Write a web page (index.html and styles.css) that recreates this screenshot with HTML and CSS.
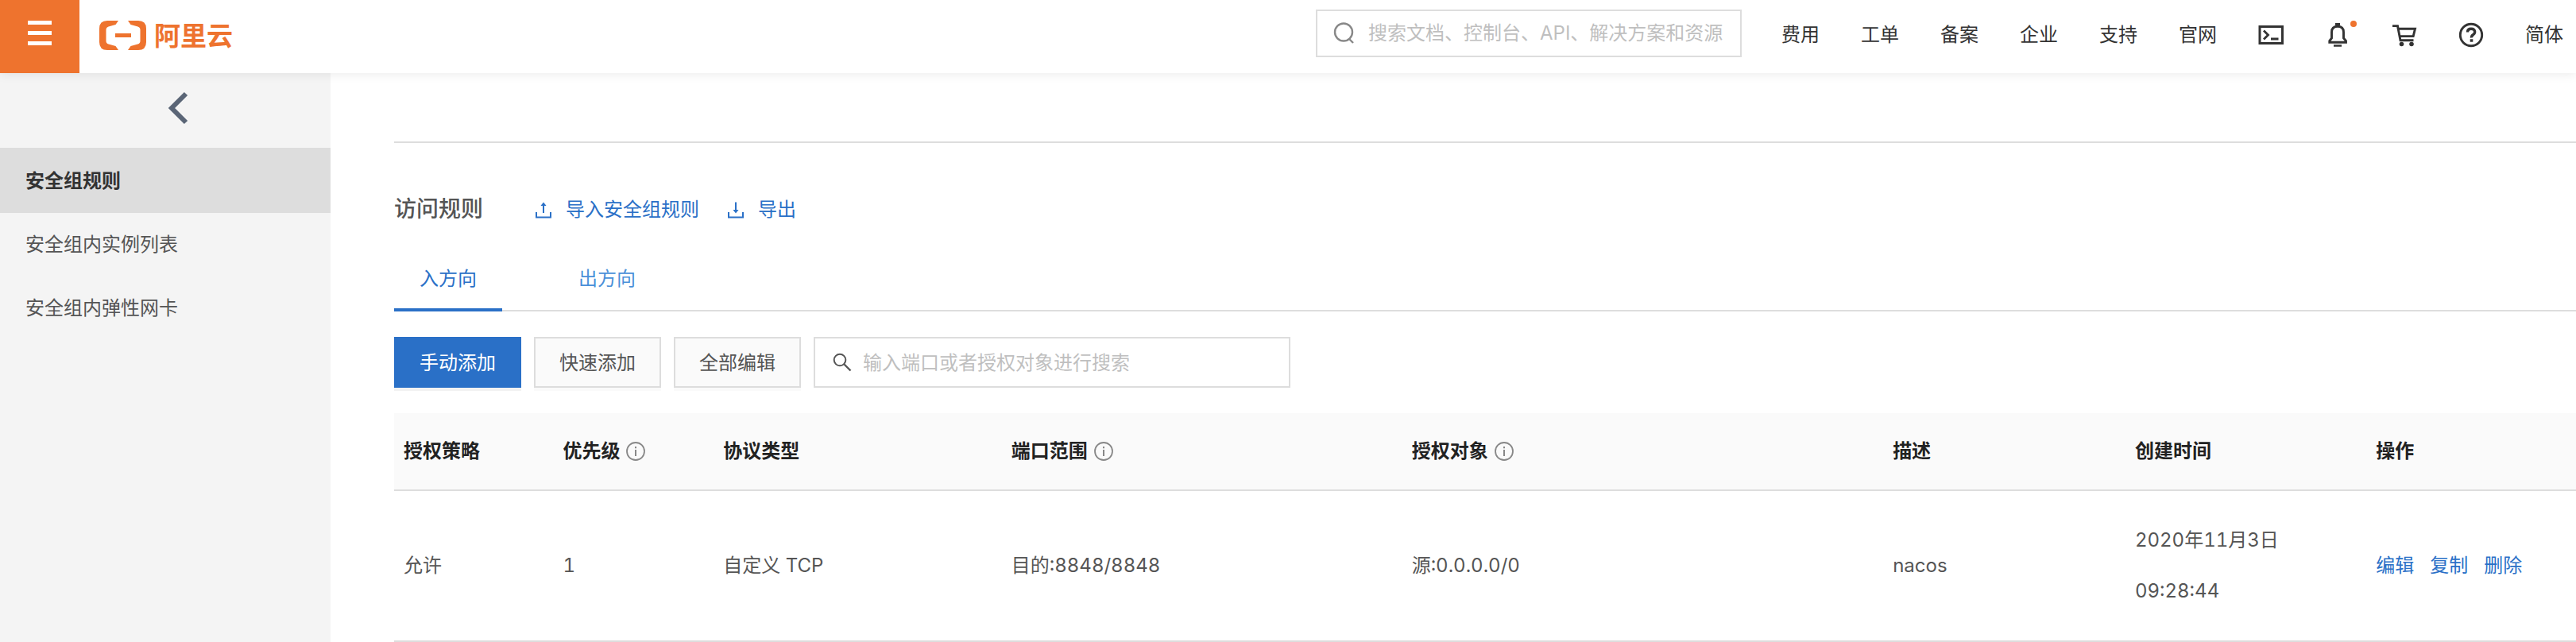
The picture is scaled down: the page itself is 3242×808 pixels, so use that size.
FILE: index.html
```html
<!DOCTYPE html>
<html lang="zh-CN">
<head>
<meta charset="utf-8">
<title>安全组规则</title>
<link rel="stylesheet" href="styles.css">
</head>
<body>
<header class="topbar">
  <button class="menu-button" type="button" aria-label="菜单">
    <svg width="30" height="32" viewBox="0 0 30 32"><path d="M0 0h30v5H0zM0 13h30v5H0zM0 26h30v5H0z" fill="#fff"/></svg>
  </button>
  <a class="logo" href="#">
    <svg width="60" height="38" viewBox="0 0 60 38" fill="currentColor">
      <path d="M24 0H10Q0 0 0 10V27Q0 37 10 37H24L20.500 32L11.500 29.500Q8.500 28.500 8.500 25.500V11.500Q8.500 8.500 11.500 7.500L20.500 5Z"/>
      <path d="M36 0H49Q59 0 59 10V27Q59 37 49 37H36L39.500 32L48.500 29.500Q51.500 28.500 51.500 25.500V11.500Q51.500 8.500 48.500 7.500L39.500 5Z"/>
      <path d="M20 16h20v5H20z"/>
    </svg>
    <span class="logo-text">阿里云</span>
  </a>
  <label class="search top-search">
    <svg width="26" height="28" viewBox="0 0 26 28" fill="none" stroke="#888" stroke-width="2.400"><circle cx="13" cy="12.500" r="11"/><path d="M19.500 20.500L25 26"/></svg>
    <input class="search-input" type="text" aria-label="搜索" placeholder="搜索文档、控制台、API、解决方案和资源">
  </label>
  <nav class="topnav">
    <a href="#">费用</a>
    <a href="#">工单</a>
    <a href="#">备案</a>
    <a href="#">企业</a>
    <a href="#">支持</a>
    <a href="#">官网</a>
    <a class="icon-link" href="#" aria-label="命令行"><svg width="32" height="32" viewBox="0 0 32 32" fill="none" stroke="currentColor"><path d="M2 5.500h28.500v21H2z" stroke-width="3"/><path d="M7 10.500l5.500 5.500L7 21.500M16 21h9.500" stroke-width="2.800"/></svg></a>
    <a class="icon-link" href="#" aria-label="消息"><svg width="32" height="32" viewBox="0 0 32 32" fill="none" stroke="currentColor"><path d="M13 1h6v3h-6zM11 28.200h10v2.600H11z" fill="currentColor" stroke="none"/><path d="M5.800 25.300V23.500L8.500 20V12.500Q8.500 5.300 16 5.300T23.500 12.500V20L26.500 23.500V25.300Z" stroke-width="2.900"/></svg><span class="dot"></span></a>
    <a class="icon-link" href="#" aria-label="购物车"><svg width="32" height="32" viewBox="0 0 32 32" fill="none" stroke="currentColor"><path d="M1 4.600h6.500L11 22.700H27.500M8.500 8.300H29.500L27.200 17.600H10.200" stroke-width="2.900"/><circle cx="12.500" cy="27.500" r="2.800" fill="currentColor" stroke="none"/><circle cx="25" cy="27.500" r="2.800" fill="currentColor" stroke="none"/></svg></a>
    <a class="icon-link" href="#" aria-label="帮助"><svg width="32" height="32" viewBox="0 0 32 32" fill="none" stroke="currentColor"><circle cx="16" cy="16" r="13.700" stroke-width="2.900"/><path d="M11.500 12.500Q11.500 8.300 16 8.300T20.700 12.300Q20.700 14.300 18.500 15.700T16.500 19.500" stroke-width="3.400"/><path d="M14.700 21.200h3.600v3.600h-3.600z" fill="currentColor" stroke="none"/></svg></a>
    <a href="#">简体</a>
  </nav>
</header>
<div class="layout">
  <aside class="sidebar">
    <button class="back" type="button" aria-label="返回">
      <svg width="26" height="42" viewBox="0 0 26 42" fill="none" stroke="#5a6576" stroke-width="6"><path d="M23 3L5 21L23 39"/></svg>
    </button>
    <nav class="side-nav">
      <a class="side-item active" href="#">安全组规则</a>
      <a class="side-item" href="#">安全组内实例列表</a>
      <a class="side-item" href="#">安全组内弹性网卡</a>
    </nav>
  </aside>
  <main class="main">
    <div class="section-gap"></div>
    <div class="section-head">
      <h1 class="title">访问规则</h1>
      <a class="action-link" href="#"><svg width="24" height="22" viewBox="0 0 24 22" fill="none" stroke="currentColor" stroke-width="2"><path d="M3 14v6.500h18V14M12 15V3"/><path d="M8.500 6L12 1.500L15.500 6z" fill="currentColor" stroke="none"/></svg>导入安全组规则</a>
      <a class="action-link" href="#"><svg width="24" height="22" viewBox="0 0 24 22" fill="none" stroke="currentColor" stroke-width="2"><path d="M3 14v6.500h18V14M12 1.500V13"/><path d="M8.500 11L12 15.500L15.500 11z" fill="currentColor" stroke="none"/></svg>导出</a>
    </div>
    <div class="tabs" role="tablist">
      <button class="tab selected" type="button" role="tab" aria-selected="true">入方向</button>
      <button class="tab" type="button" role="tab" aria-selected="false">出方向</button>
    </div>
    <div class="toolbar">
      <button class="btn primary" type="button">手动添加</button>
      <button class="btn" type="button">快速添加</button>
      <button class="btn" type="button">全部编辑</button>
      <label class="search rule-search">
        <svg width="24" height="24" viewBox="0 0 24 24" fill="none" stroke="#555" stroke-width="2"><circle cx="9" cy="9" r="7.300"/><path d="M14 14L22.500 22.500" stroke-width="2.400"/></svg>
        <input class="search-input" type="text" aria-label="搜索规则" placeholder="输入端口或者授权对象进行搜索">
      </label>
    </div>
    <table class="rules">
      <colgroup><col class="c-policy"><col class="c-priority"><col class="c-protocol"><col class="c-port"><col class="c-object"><col class="c-desc"><col class="c-time"><col></colgroup>
      <thead>
        <tr>
          <th scope="col">授权策略</th>
          <th scope="col"><span class="with-info">优先级<svg width="24" height="24" viewBox="0 0 24 24" fill="none" stroke="#888"><circle cx="12" cy="12" r="11" stroke-width="1.800"/><path d="M12 10v8M12 6v2.200" stroke-width="2"/></svg></span></th>
          <th scope="col">协议类型</th>
          <th scope="col"><span class="with-info">端口范围<svg width="24" height="24" viewBox="0 0 24 24" fill="none" stroke="#888"><circle cx="12" cy="12" r="11" stroke-width="1.800"/><path d="M12 10v8M12 6v2.200" stroke-width="2"/></svg></span></th>
          <th scope="col"><span class="with-info">授权对象<svg width="24" height="24" viewBox="0 0 24 24" fill="none" stroke="#888"><circle cx="12" cy="12" r="11" stroke-width="1.800"/><path d="M12 10v8M12 6v2.200" stroke-width="2"/></svg></span></th>
          <th scope="col">描述</th>
          <th scope="col">创建时间</th>
          <th scope="col">操作</th>
        </tr>
      </thead>
      <tbody>
        <tr>
          <td>允许</td>
          <td>1</td>
          <td>自定义 TCP</td>
          <td>目的:8848/8848</td>
          <td>源:0.0.0.0/0</td>
          <td>nacos</td>
          <td class="time">2020年11月3日<br>09:28:44</td>
          <td><span class="row-actions"><a href="#">编辑</a><a href="#">复制</a><a href="#">删除</a></span></td>
        </tr>
      </tbody>
    </table>
  </main>
</div>
</body>
</html>
```
FILE: styles.css
```css
* {
  box-sizing: border-box;
}

body {
  margin: 0;
  min-height: 100vh;
  display: flex;
  flex-direction: column;
  background: #fff;
  color: #555;
  font-family: Inter, "Noto Sans CJK SC", sans-serif;
  font-size: 24px;
  line-height: 36px;
}

a {
  color: inherit;
  text-decoration: none;
}

button,
input {
  font: inherit;
  color: inherit;
  border: 0;
  margin: 0;
  padding: 0;
  background: none;
}

svg {
  display: block;
  flex: none;
}

.topbar {
  position: relative;
  z-index: 1;
  display: flex;
  align-items: center;
  height: 92px;
  padding-right: 16px;
  background: #fff;
  box-shadow: 0 2px 12px rgba(0, 0, 0, 0.08);
}

.menu-button {
  align-self: stretch;
  width: 100px;
  padding-bottom: 8px;
  display: flex;
  align-items: center;
  justify-content: center;
  background: #ee732e;
}

.logo {
  display: flex;
  align-items: center;
  gap: 9px;
  margin-left: 25px;
  margin-right: auto;
  padding-bottom: 3px;
  color: #ee732e;
}

.logo-text {
  font-size: 33px;
  font-weight: 700;
}

.search {
  display: flex;
  align-items: center;
  border: 2px solid #ddd;
  background: #fff;
}

.search-input {
  flex: 1;
  min-width: 0;
  outline: 0;
}

.search-input::placeholder {
  color: #bfbfbf;
  opacity: 1;
}

.top-search {
  width: 536px;
  height: 60px;
  margin-bottom: 8px;
  padding: 0 20px;
  gap: 18px;
}

.topnav {
  display: flex;
  align-items: center;
  gap: 52px;
  margin-left: 50px;
  padding-bottom: 4px;
  color: #333;
}

.icon-link {
  position: relative;
}

.dot {
  position: absolute;
  top: -2px;
  right: -8px;
  width: 8px;
  height: 8px;
  border-radius: 50%;
  background: #ee732e;
}

.layout {
  flex: 1;
  display: flex;
}

.sidebar {
  flex: none;
  width: 416px;
  background: #f4f4f4;
}

.back {
  display: flex;
  align-items: center;
  justify-content: center;
  width: 100%;
  height: 94px;
  padding-left: 32px;
  padding-bottom: 6px;
}

.side-item {
  display: flex;
  align-items: center;
  height: 80px;
  padding: 0 32px;
}

.side-item.active {
  height: 82px;
  padding-top: 2px;
  background: #ddd;
  color: #333;
  font-weight: 700;
}

.main {
  flex: 1;
  min-width: 0;
  padding-left: 80px;
}

.section-gap {
  height: 88px;
  border-bottom: 2px solid #ddd;
}

.section-head {
  display: flex;
  align-items: center;
  padding-top: 64px;
}

.title {
  margin: 0 64px 0 0;
  font-size: 28px;
  font-weight: 500;
  line-height: 36px;
}

.action-link {
  display: flex;
  align-items: center;
  gap: 16px;
  margin-right: 34px;
  padding-top: 2px;
  color: #2a70c7;
}

.tabs {
  display: flex;
  gap: 64px;
  margin-top: 30px;
  box-shadow: inset 0 -2px #ddd;
}

.tab {
  height: 80px;
  padding: 2px 32px 0;
  border-bottom: 4px solid transparent;
  color: #4a90d9;
}

.tab.selected {
  border-color: #2a70c7;
  color: #2a70c7;
}

.toolbar {
  display: flex;
  gap: 16px;
  padding: 32px 0;
}

.btn {
  width: 160px;
  height: 64px;
  padding-top: 2px;
  border: 2px solid #ddd;
  background: #fafafa;
  box-shadow: 0 4px #fafafa;
}

.btn.primary {
  border-color: #2a70c7;
  background: #2a70c7;
  box-shadow: 0 4px #f2f2f2;
  color: #fff;
}

.rule-search {
  width: 600px;
  height: 64px;
  padding: 0 22px;
  gap: 14px;
}

.rule-search .search-input {
  padding-top: 2px;
}

.rules {
  width: 100%;
  table-layout: fixed;
  border-collapse: separate;
  border-spacing: 0;
  font-variant-numeric: tabular-nums;
}

.c-policy { width: 7.3%; }
.c-priority { width: 7.35%; }
.c-protocol { width: 13.2%; }
.c-port { width: 18.35%; }
.c-object { width: 22.05%; }
.c-desc { width: 11.1%; }
.c-time { width: 11.05%; }

.rules th,
.rules td {
  padding: 30px 12px;
  border-bottom: 2px solid #ddd;
  text-align: left;
}

.rules th {
  background: #fafafa;
  color: #222;
  font-weight: 700;
}

.rules .time {
  line-height: 64px;
}

.with-info {
  display: flex;
  align-items: center;
  gap: 8px;
}

.row-actions {
  display: flex;
  gap: 20px;
  color: #2a70c7;
}
```
